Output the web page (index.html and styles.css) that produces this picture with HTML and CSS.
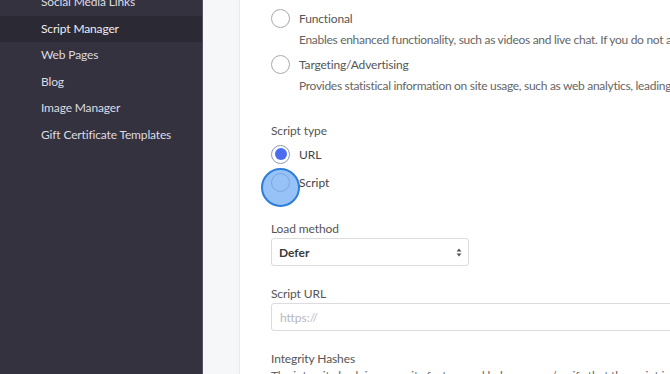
FILE: index.html
```html
<!DOCTYPE html>
<html>
<head>
<meta charset="utf-8">
<link rel="stylesheet" href="styles.css">
</head>
<body>
<div class="app">
  <nav class="sidebar">
    <div class="nav-item">Social Media Links</div>
    <div class="nav-item active">Script Manager</div>
    <div class="nav-item">Web Pages</div>
    <div class="nav-item">Blog</div>
    <div class="nav-item">Image Manager</div>
    <div class="nav-item">Gift Certificate Templates</div>
  </nav>
  <div class="gutter"></div>
  <main class="card">
    <div class="option">
      <span class="radio"></span>
      <div class="option-text">
        <div class="option-title">Functional</div>
        <div class="option-desc">Enables enhanced functionality, such as videos and live chat. If you do not allow these, then some or all of these functions may not work properly.</div>
      </div>
    </div>
    <div class="option">
      <span class="radio"></span>
      <div class="option-text">
        <div class="option-title">Targeting/Advertising</div>
        <div class="option-desc">Provides statistical information on site usage, such as web analytics, leading to better targeting of advertisements.</div>
      </div>
    </div>

    <div class="field-label first">Script type</div>
    <div class="choice">
      <span class="radio checked"><span class="dot"></span></span>
      <span class="choice-label">URL</span>
    </div>
    <div class="choice">
      <span class="radio"><span class="click-ring"></span></span>
      <span class="choice-label">Script</span>
    </div>

    <div class="field-label load">Load method</div>
    <div class="select">
      <span class="select-value">Defer</span>
      <svg class="select-arrows" width="6" height="11" viewBox="0 0 6 11"><path d="M0.5 4.5 L3 1.5 L5.5 4.5 Z" fill="#555"/><path d="M0.5 6.5 L3 9.5 L5.5 6.5 Z" fill="#555"/></svg>
    </div>

    <div class="field-label">Script URL</div>
    <div class="input"><span class="placeholder">https://</span></div>

    <div class="field-label">Integrity Hashes</div>
    <div class="field-desc">The integrity hash is a security feature and helps ensure/verify that the script is delivered without unexpected changes.</div>
  </main>
</div>
</body>
</html>
```

FILE: styles.css
```css
* { box-sizing: border-box; }
html, body { margin: 0; padding: 0; height: 100%; overflow: hidden; }
body { font-family: Lato, "Open Sans", sans-serif; background: #fff; }

.app { display: flex; height: 374px; }

.sidebar {
  width: 203px;
  flex: none;
  background: #35323f;
  border-right: 1px solid #55525f;
  margin-top: -11px;
  height: 385px;
}
.nav-item {
  height: 26.6px;
  line-height: 26.6px;
  padding-left: 41px;
  font-size: 12px;
  letter-spacing: -0.15px;
  color: #dcdbe2;
  white-space: nowrap;
}
.nav-item.active { background: #2b2933; color: #eeedf2; }

.gutter {
  width: 37px;
  flex: none;
  background: #f6f7f9;
  border-right: 1px solid #e8e9ec;
}

.card {
  flex: 1;
  min-width: 0;
  background: #fff;
  padding: 7px 0 0 31px;
  overflow: hidden;
  color: #555;
}

.option { display: flex; align-items: flex-start; margin-bottom: 2px; }
.option .radio { margin-top: 1.5px; }
.option-text { margin-left: 9px; min-width: 0; }
.option-title { font-size: 12px; line-height: 22px; padding-top: 1px; margin-bottom: -1px; color: #555; white-space: nowrap; letter-spacing: -0.15px; }
.option-desc { font-size: 12px; line-height: 22px; color: #666; white-space: nowrap; letter-spacing: -0.3px; }

.radio {
  position: relative;
  flex: none;
  width: 19px;
  height: 19px;
  border: 1px solid #a9a9ad;
  border-radius: 50%;
  background: #fff;
  display: inline-flex;
  align-items: center;
  justify-content: center;
}
.radio.checked { border-color: #8d97b8; }
.radio .dot { width: 12px; height: 12px; border-radius: 50%; background: #4b6cf0; }
.click-ring {
  position: absolute;
  left: -11px;
  top: -6px;
  width: 39px;
  height: 39px;
  border-radius: 50%;
  border: 2px solid #2c7ed8;
  background: rgba(100, 165, 245, 0.68);
}

.field-label { font-size: 12px; line-height: 18px; color: #555; letter-spacing: -0.1px; }
.field-label.first { margin-top: 25px; }
.field-label.load { margin-top: 24px; }

.choice { display: flex; align-items: center; height: 28px; }
.choice-label { margin-left: 9px; font-size: 12px; color: #444; position: relative; }

.select {
  width: 198px;
  height: 28px;
  border: 1px solid #dcdcdf;
  border-radius: 3px;
  display: flex;
  align-items: center;
  justify-content: space-between;
  padding: 0 6px 0 7px;
  margin-bottom: 19px;
}
.select-value { font-size: 12px; font-weight: 700; color: #3a3a3a; }
.select-arrows { display: block; }

.input {
  height: 28px;
  width: 420px;
  border: 1px solid #dcdcdf;
  border-radius: 3px;
  display: flex;
  align-items: center;
  padding-left: 8px;
  margin-bottom: 19px;
}
.placeholder { font-size: 12px; color: #b8b8bc; }

.field-desc { font-size: 12px; line-height: 18px; color: #666; white-space: nowrap; margin-top: -1px; letter-spacing: -0.2px; }
```
